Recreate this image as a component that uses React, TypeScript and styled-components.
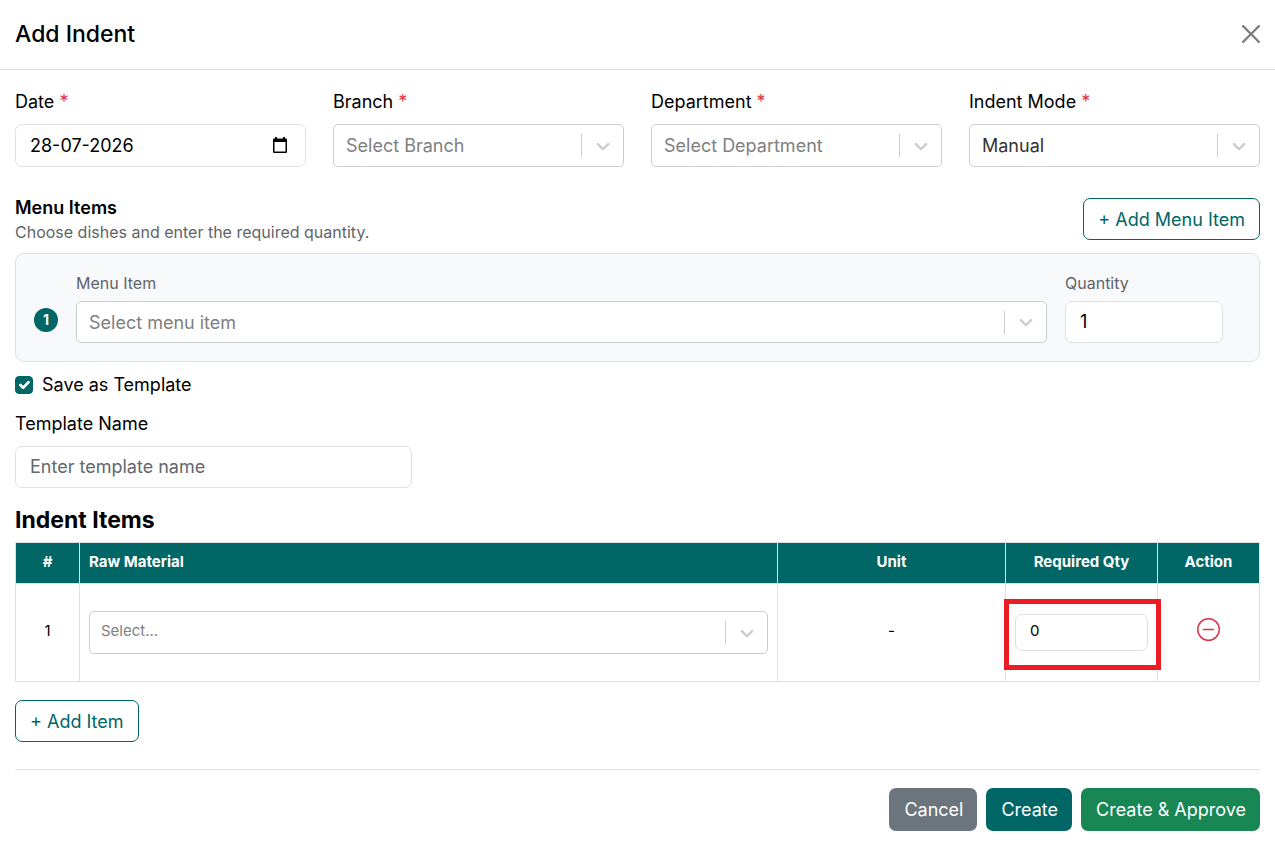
import React, { useState } from "react";
import styled, { createGlobalStyle, css } from "styled-components";
import { BsDashCircle } from "react-icons/bs";

const teal = "#006666";
const line = "#dee2e6";

const GlobalStyle = createGlobalStyle`
  *, *::before, *::after { box-sizing: border-box; }
  body {
    margin: 0;
    background: #fff;
    color: #000;
    font-family: Inter, "Liberation Sans", sans-serif;
    font-size: 18px;
    line-height: 27px;
  }
  button, input, select { font: inherit; color: inherit; margin: 0; }
`;

const Dialog = styled.main`
  display: flex;
  flex-direction: column;
`;

const Header = styled.header`
  display: flex;
  align-items: center;
  justify-content: space-between;
  height: 70px;
  padding: 0 15px 2px;
  border-bottom: 1px solid ${line};
`;

const Title = styled.h1`
  margin: 0;
  font-size: 23px;
  font-weight: 500;
  line-height: 34px;
`;

const CloseButton = styled.button`
  display: flex;
  padding: 0;
  border: 0;
  background: none;
  opacity: 0.5;
  cursor: pointer;
`;

const Body = styled.form`
  padding: 18px 15px 14px;
`;

const Fields = styled.div`
  display: grid;
  grid-template-columns: repeat(4, 1fr);
  gap: 27px;
`;

const Field = styled.div<{ $gap?: number }>`
  display: flex;
  flex-direction: column;
  gap: ${(p) => p.$gap ?? 9}px;
  min-width: 0;
`;

const Label = styled.label<{ $muted?: boolean }>`
  ${(p) => p.$muted && css`
    color: #5f6469;
    font-size: 16px;
    line-height: 24px;
  `}
`;

const Required = styled.span`
  color: #dc3545;
`;

const TextInput = styled.input<{ $compact?: boolean }>`
  display: block;
  width: 100%;
  height: ${(p) => (p.$compact ? 37 : 42)}px;
  padding: 0 14px ${(p) => (p.$compact ? 4 : 1)}px;
  border: 1px solid ${line};
  border-radius: 7px;
  background: #fff;
  font-size: ${(p) => (p.$compact ? 15 : 18)}px;
  outline: none;
  &::placeholder { color: #62686d; opacity: 1; }
`;

const DateBox = styled.div`
  display: flex;
  align-items: center;
  height: 43px;
  padding-right: 17px;
  border: 1px solid ${line};
  border-radius: 7px;
`;

const DateInput = styled.input`
  flex: 1;
  min-width: 0;
  padding: 0 14px;
  border: 0;
  background: none;
  outline: none;
`;

const IconButton = styled.button`
  display: inline-flex;
  padding: 0;
  border: 0;
  background: none;
  cursor: pointer;
`;

const SelectBox = styled.div<{ $height: number }>`
  display: grid;
  align-items: center;
  height: ${(p) => p.$height}px;
  border: 1px solid #ccc;
  border-radius: 5px;
  background: #fff;
  > * { grid-area: 1 / 1; }
`;

const SelectControl = styled.select<{ $empty: boolean; $small?: boolean }>`
  width: 100%;
  height: 100%;
  padding: 0 52px ${(p) => (p.$small ? 4 : 0)}px ${(p) => (p.$small ? 11 : 12)}px;
  border: 0;
  border-radius: 5px;
  background: none;
  appearance: none;
  outline: none;
  color: ${(p) => (p.$empty ? "#808080" : "#333")};
  font-size: ${(p) => (p.$small ? 15 : 18)}px;
`;

const Indicator = styled.span`
  justify-self: end;
  display: flex;
  align-items: center;
  justify-content: center;
  width: 42px;
  height: 23px;
  border-left: 1px solid #ccc;
  color: #ccc;
  pointer-events: none;
`;

const SectionHead = styled.div`
  display: flex;
  align-items: center;
  justify-content: space-between;
  margin: 27px 0 9px;
`;

const SectionText = styled.div`
  padding-top: 2px;
`;

const SectionTitle = styled.h2`
  margin: 0;
  font-size: 18px;
  font-weight: 600;
  line-height: 24px;
`;

const Hint = styled.p`
  margin: 0;
  color: #5f6469;
  font-size: 16px;
  line-height: 24px;
`;

const OutlineButton = styled.button`
  height: 42px;
  padding: 0 14px;
  border: 1px solid ${teal};
  border-radius: 7px;
  background: #fff;
  color: ${teal};
  cursor: pointer;
`;

const MenuPanel = styled.div`
  display: grid;
  grid-template-columns: 24px minmax(0, 1fr) 158px;
  gap: 18px;
  align-items: end;
  padding: 17px 36px 18px 18px;
  border: 1px solid ${line};
  border-radius: 9px;
  background: #f8f9fb;
`;

const Badge = styled.span`
  display: flex;
  align-items: center;
  justify-content: center;
  width: 24px;
  height: 24px;
  margin-bottom: 11px;
  border-radius: 50%;
  background: ${teal};
  color: #fff;
  font-size: 14px;
  font-weight: 700;
  line-height: 18px;
`;

const CheckRow = styled.div`
  display: flex;
  align-items: center;
  gap: 9px;
  margin: 9px 0 12px;
`;

const CheckBox = styled.span`
  display: grid;
  width: 18px;
  height: 18px;
  > * { grid-area: 1 / 1; }
  svg { pointer-events: none; }
`;

const Check = styled.input`
  appearance: none;
  width: 18px;
  height: 18px;
  border: 1px solid ${line};
  border-radius: 4px;
  &:checked { background: ${teal}; border-color: ${teal}; }
`;

const TemplateField = styled(Field)`
  width: calc((100% + 27px) / 3 - 27px);
`;

const ItemsTitle = styled.h2`
  margin: 19px 0 8px;
  font-size: 23px;
  font-weight: 700;
  line-height: 27px;
`;

const Table = styled.table`
  width: 100%;
  table-layout: fixed;
  border-collapse: collapse;
  font-size: 15px;
  line-height: 22px;
`;

const Col = styled.col<{ $w?: number }>`
  width: ${(p) => (p.$w ? `${p.$w}px` : "auto")};
`;

const Th = styled.th<{ $left?: boolean }>`
  height: 41px;
  padding: 0 9px 3px;
  border: 1px solid ${line};
  background: ${teal};
  color: #fff;
  font-weight: 700;
  text-align: ${(p) => (p.$left ? "left" : "center")};
`;

const Td = styled.td<{ $text?: boolean }>`
  height: 98px;
  padding: 0 9px ${(p) => (p.$text ? 4 : 0)}px;
  border: 1px solid ${line};
  text-align: center;
  vertical-align: middle;
`;

const Highlight = styled.div`
  position: relative;
  &::after {
    content: "";
    position: absolute;
    inset: -15px -13px -19px -11px;
    border: 5px solid #ed1c24;
    pointer-events: none;
  }
`;

const AddRow = styled.div`
  padding: 18px 0 27px;
`;

const Footer = styled.footer`
  display: flex;
  justify-content: flex-end;
  gap: 9px;
  padding-top: 18px;
  border-top: 1px solid ${line};
`;

const SolidButton = styled.button<{ $color: string }>`
  height: 43px;
  padding: 0 14px 0 15px;
  border: 0;
  border-radius: 7px;
  background: ${(p) => p.$color};
  color: #fff;
  cursor: pointer;
`;

type DropdownProps = {
  id: string;
  placeholder?: string;
  options: string[];
  initial?: string;
  small?: boolean;
  label?: string;
  height?: number;
};

function Dropdown({ id, placeholder, options, initial = "", small, label, height = 43 }: DropdownProps) {
  const [value, setValue] = useState(initial);
  return (
    <SelectBox $height={height}>
      <SelectControl
        id={id}
        aria-label={label}
        value={value}
        $empty={!value}
        $small={small}
        onChange={(e) => setValue(e.target.value)}
      >
        {placeholder && <option value="">{placeholder}</option>}
        {options.map((o) => (
          <option key={o}>{o}</option>
        ))}
      </SelectControl>
      <Indicator>
        <svg width="22" height="22" viewBox="0 0 20 20" fill="currentColor" aria-hidden="true">
          <path d="M4.516 7.548c0.436-0.446 1.043-0.481 1.576 0l3.908 3.747 3.908-3.747c0.533-0.481 1.141-0.446 1.574 0 0.436 0.445 0.408 1.197 0 1.615-0.406 0.418-4.695 4.502-4.695 4.502-0.217 0.223-0.502 0.335-0.787 0.335s-0.57-0.112-0.789-0.335c0 0-4.287-4.084-4.695-4.502s-0.436-1.17 0-1.615z" />
        </svg>
      </Indicator>
    </SelectBox>
  );
}

export default function App() {
  const [save, setSave] = useState(true);
  return (
    <>
      <GlobalStyle />
      <Dialog>
        <Header>
          <Title>Add Indent</Title>
          <CloseButton type="button" aria-label="Close">
            <svg width="18" height="18" viewBox="0 0 16 16" aria-hidden="true">
              <path d="M.293.293a1 1 0 0 1 1.414 0L8 6.586 14.293.293a1 1 0 1 1 1.414 1.414L9.414 8l6.293 6.293a1 1 0 0 1-1.414 1.414L8 9.414l-6.293 6.293a1 1 0 0 1-1.414-1.414L6.586 8 .293 1.707a1 1 0 0 1 0-1.414z" />
            </svg>
          </CloseButton>
        </Header>
        <Body onSubmit={(e) => e.preventDefault()}>
          <Fields>
            <Field>
              <Label htmlFor="date">Date <Required>*</Required></Label>
              <DateBox>
                <DateInput id="date" defaultValue="28-07-2026" />
                <IconButton type="button" aria-label="Open calendar">
                  <svg width="16" height="18" viewBox="0 0 16 18" aria-hidden="true">
                    <path fillRule="evenodd" d="M3 0h2v1.500h6V0h2v1.500h1a1 1 0 0 1 1 1V15a1 1 0 0 1-1 1H2a1 1 0 0 1-1-1V2.500a1 1 0 0 1 1-1h1zM2.500 5v9.500h11V5z" />
                  </svg>
                </IconButton>
              </DateBox>
            </Field>
            <Field>
              <Label htmlFor="branch">Branch <Required>*</Required></Label>
              <Dropdown id="branch" placeholder="Select Branch" options={[]} />
            </Field>
            <Field>
              <Label htmlFor="department">Department <Required>*</Required></Label>
              <Dropdown id="department" placeholder="Select Department" options={[]} />
            </Field>
            <Field>
              <Label htmlFor="mode">Indent Mode <Required>*</Required></Label>
              <Dropdown id="mode" options={["Manual"]} initial="Manual" />
            </Field>
          </Fields>

          <SectionHead>
            <SectionText>
              <SectionTitle>Menu Items</SectionTitle>
              <Hint>Choose dishes and enter the required quantity.</Hint>
            </SectionText>
            <OutlineButton type="button">+ Add Menu Item</OutlineButton>
          </SectionHead>

          <MenuPanel>
            <Badge>1</Badge>
            <Field $gap={6}>
              <Label $muted htmlFor="menu-item">Menu Item</Label>
              <Dropdown id="menu-item" placeholder="Select menu item" options={[]} height={42} />
            </Field>
            <Field $gap={6}>
              <Label $muted htmlFor="quantity">Quantity</Label>
              <TextInput id="quantity" defaultValue="1" inputMode="numeric" />
            </Field>
          </MenuPanel>

          <CheckRow>
            <CheckBox>
              <Check id="save" type="checkbox" checked={save} onChange={(e) => setSave(e.target.checked)} />
              {save && (
                <svg width="18" height="18" viewBox="0 0 20 20" fill="none" stroke="#fff" strokeWidth="3" strokeLinecap="round" strokeLinejoin="round" aria-hidden="true">
                  <path d="m6 10 3 3 6-6" />
                </svg>
              )}
            </CheckBox>
            <Label htmlFor="save">Save as Template</Label>
          </CheckRow>

          <TemplateField>
            <Label htmlFor="template">Template Name</Label>
            <TextInput id="template" placeholder="Enter template name" />
          </TemplateField>

          <ItemsTitle>Indent Items</ItemsTitle>
          <Table>
            <colgroup>
              <Col $w={64} />
              <Col />
              <Col $w={228} />
              <Col $w={152} />
              <Col $w={102} />
            </colgroup>
            <thead>
              <tr>
                <Th>#</Th>
                <Th $left>Raw Material</Th>
                <Th>Unit</Th>
                <Th>Required Qty</Th>
                <Th>Action</Th>
              </tr>
            </thead>
            <tbody>
              <tr>
                <Td $text>1</Td>
                <Td>
                  <Dropdown id="material" label="Raw Material" placeholder="Select..." options={[]} small />
                </Td>
                <Td $text>-</Td>
                <Td>
                  <Highlight>
                    <TextInput $compact aria-label="Required Qty" defaultValue="0" inputMode="numeric" />
                  </Highlight>
                </Td>
                <Td>
                  <IconButton type="button" aria-label="Remove item">
                    <BsDashCircle size={23} color="#dc3545" />
                  </IconButton>
                </Td>
              </tr>
            </tbody>
          </Table>
          <AddRow>
            <OutlineButton type="button">+ Add Item</OutlineButton>
          </AddRow>

          <Footer>
            <SolidButton type="button" $color="#6c757d">Cancel</SolidButton>
            <SolidButton type="submit" $color={teal}>Create</SolidButton>
            <SolidButton type="button" $color="#198754">Create &amp; Approve</SolidButton>
          </Footer>
        </Body>
      </Dialog>
    </>
  );
}
